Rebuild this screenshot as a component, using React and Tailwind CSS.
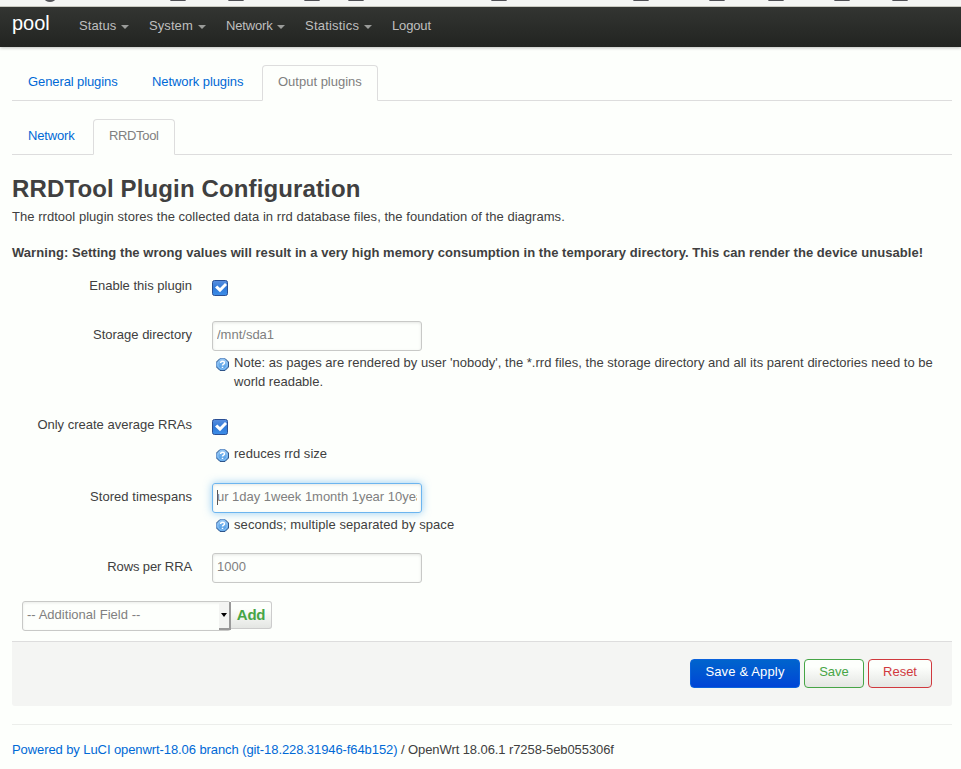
import { clsx } from "clsx";

const NAV = [
  { label: "Status", width: "w-[70px]", tracking: "tracking-[0.08px]", menu: true },
  { label: "System", width: "w-[77px]", tracking: "tracking-[0.08px]", menu: true },
  { label: "Network", width: "w-[79px]", tracking: "tracking-[-0.15px]", menu: true },
  { label: "Statistics", width: "w-[87px]", tracking: "tracking-[0.21px]", menu: true },
  { label: "Logout", width: "w-[60px]", tracking: "tracking-[-0.15px]", menu: false },
];

function ToolbarEdge() {
  return (
    <svg className="block h-[7px] w-full" width="961" height="7" shapeRendering="crispEdges">
      <rect width="961" height="6" fill="#f4f5f3" />
      <rect y="6" width="961" height="1" fill="#c9c9c0" />
      <ellipse cx="50" cy="-1.3" rx="5.4" ry="3.3" fill="#55555a" shapeRendering="auto" />
      {[170, 228, 304, 348, 491, 633, 709, 768, 834, 892].map((x) => (
        <g key={x}>
          <rect x={x} width="16" height="1" fill="#8a8a8e" />
          <rect x={x + 1} width="14" height="1" fill="#505055" />
        </g>
      ))}
    </svg>
  );
}

function Tab({ active, className, children }) {
  return (
    <a
      className={clsx(
        "block h-9 rounded-t border px-[15px] pt-[7px] leading-[18px] whitespace-nowrap",
        active ? "border-[#ddd] border-b-[#fdfffc] bg-[#fdfffc] text-[#808080]" : "border-transparent text-[#0069d6]",
        className,
      )}
    >
      {children}
    </a>
  );
}

function CheckBox() {
  return (
    <svg className="block size-4" viewBox="0 0 16 16">
      <defs>
        <linearGradient id="box" x1="0" y1="0" x2="0" y2="1">
          <stop offset="0" stopColor="#5a8fdf" />
          <stop offset="0.5" stopColor="#3079d8" />
          <stop offset="1" stopColor="#3d8ee8" />
        </linearGradient>
      </defs>
      <rect x="0.5" y="0.5" width="15" height="15" rx="2" fill="url(#box)" stroke="#2a4f94" />
      <path d="M3 7.4 L5.3 5.4 L8 8 L13 3 L15 5 L8 12.2 Z" fill="#fff" />
    </svg>
  );
}

function HelpIcon() {
  return (
    <svg className="block size-[13px] shrink-0" viewBox="0 0 13 13">
      <defs>
        <linearGradient id="help" x1="0" y1="0" x2="0" y2="1">
          <stop offset="0" stopColor="#8abff0" />
          <stop offset="1" stopColor="#4a9ae6" />
        </linearGradient>
      </defs>
      <path d="M4 .5h5L12.5 4v5L9 12.5H4L.5 9V4Z" fill="url(#help)" stroke="#2f5488" />
      <path d="M4.1 .5h4.8M.5 4.1v4.8" stroke="#6f9bd0" />
      <circle cx="6.5" cy="6.5" r="4.7" fill="none" stroke="#a5d0f8" strokeWidth="0.8" />
      <path d="M4.6 5.1C4.6 2.8 8.5 2.8 8.5 4.9c0 1.3-2 1.2-2 2.6M6.5 8.7v1.4" fill="none" stroke="#fff" strokeWidth="1.5" />
    </svg>
  );
}

function Row({ label, className, labelClass, children }) {
  return (
    <div className={clsx("flex", className)}>
      <div className={clsx("mt-[6px] w-[180px] shrink-0 text-right leading-[18px] whitespace-nowrap", labelClass)}>{label}</div>
      <div className="ml-5 min-w-0 grow">{children}</div>
    </div>
  );
}

function Hint({ className, textClass, children }) {
  return (
    <div className={clsx("flex pl-1", className)}>
      <HelpIcon />
      <div className={clsx("ml-[5px] leading-[19px] whitespace-nowrap", textClass)}>{children}</div>
    </div>
  );
}

function Field({ focused, children }) {
  return (
    <div
      className={clsx(
        "h-[30px] w-[210px] rounded-[3px] border px-1 pt-[4px] leading-[18px] text-[#808080]",
        focused
          ? "border-[#6cb5ef] shadow-[inset_0_1px_3px_rgba(0,0,0,0.1),0_0_8px_rgba(82,168,236,0.6)]"
          : "border-[#c8c9c7] shadow-[inset_0_1px_3px_rgba(0,0,0,0.1)]",
      )}
    >
      <div className="flex overflow-hidden whitespace-nowrap">{children}</div>
    </div>
  );
}

export default function App() {
  return (
    <div className="h-[769px] w-[961px] overflow-hidden bg-[#fdfffc] font-['Liberation_Sans',Arial,sans-serif] text-[13px] text-[#404040]">
      <ToolbarEdge />
      <header className="flex h-10 bg-linear-to-b from-[#333532] to-[#222421] pl-3 text-[#bfbfbf] shadow-[0_1px_3px_rgba(0,0,0,0.25)]">
        <a className="w-[57px] pt-[4px] text-[20px] leading-[24px] text-white">pool</a>
        <nav className="flex">
          {NAV.map((item) => (
            <a key={item.label} className={clsx("flex px-2.5 pt-[10px] leading-[18px]", item.width, item.tracking)}>
              {item.label}
              {item.menu && (
                <span className="mt-[8px] ml-auto h-0 w-0 border-x-4 border-t-4 border-x-transparent border-t-[#9a9b99]" />
              )}
            </a>
          ))}
        </nav>
      </header>

      <main className="mr-[9px] ml-3">
        <nav className="mt-[18px] flex h-9 border-b border-[#ddd]">
          <Tab className="w-[124px] tracking-[-0.1px]">General plugins</Tab>
          <Tab className="w-[126px] tracking-[-0.07px]">Network plugins</Tab>
          <Tab active className="w-[116px]">Output plugins</Tab>
        </nav>
        <nav className="mt-[18px] flex h-9 border-b border-[#ddd]">
          <Tab className="w-[81px] tracking-[-0.15px]">Network</Tab>
          <Tab active className="w-[82px] tracking-[-0.35px]">RRDTool</Tab>
        </nav>

        <h2 className="mt-[16px] text-[24px] leading-9 font-bold tracking-[0.13px] whitespace-nowrap">
          RRDTool Plugin Configuration
        </h2>
        <p className="mt-px leading-[18px] tracking-[0.036px] whitespace-nowrap">
          The rrdtool plugin stores the collected data in rrd database files, the foundation of the diagrams.
        </p>
        <p className="mt-[18px] leading-[18px] font-bold tracking-[0.052px] whitespace-nowrap">
          Warning: Setting the wrong values will result in a very high memory consumption in the temporary directory. This can
          render the device unusable!
        </p>

        <Row label="Enable this plugin" className="mt-[9px] h-[49px]">
          <div className="pt-[9px]"><CheckBox /></div>
        </Row>
        <Row label="Storage directory" className="h-[90px]">
          <div className="pt-[1px]"><Field>/mnt/sda1</Field></div>
          <Hint className="mt-[7px]" textClass="-mt-[5px] tracking-[0.018px]">
            Note: as pages are rendered by user 'nobody', the *.rrd files, the storage directory and all its parent directories
            need to be
            <br />
            world readable.
          </Hint>
        </Row>
        <Row label="Only create average RRAs" className="h-[72px]">
          <div className="pt-[9px]"><CheckBox /></div>
          <Hint className="mt-[14px]" textClass="-mt-[5px] tracking-[0.04px]">reduces rrd size</Hint>
        </Row>
        <Row label="Stored timespans" labelClass="tracking-[0.05px]" className="h-[70px]">
          <div className="pt-[1px]">
            <Field focused>
              <span className="mt-[2px] h-[15px] w-px shrink-0 bg-[#555]" />
              <span className="-ml-px tracking-[-0.02px]">ur 1day 1week 1month 1year 10yea</span>
            </Field>
          </div>
          <Hint className="mt-[6px]" textClass="-mt-[4px] tracking-[0.075px]">seconds; multiple separated by space</Hint>
        </Row>
        <Row label="Rows per RRA" labelClass="tracking-[-0.1px]" className="h-[48px]">
          <div className="pt-[1px]"><Field>1000</Field></div>
        </Row>

        <div className="ml-2.5 flex h-[41px] items-start pt-[1px]">
          <div className="flex h-[30px] w-[209px] rounded-[3px] border border-[#c8c9c7] pl-1 text-[#808080] shadow-[inset_0_1px_3px_rgba(0,0,0,0.08)]">
            <span className="pt-[4px] leading-[18px] tracking-[0.03px]">-- Additional Field --</span>
            <span className="-mr-px ml-auto flex h-[28px] w-[12px] items-center justify-center border-r-2 border-b-2 border-[#999] bg-[#f3f4f2]">
              <span className="h-0 w-0 border-x-[3.5px] border-t-4 border-x-transparent border-t-black" />
            </span>
          </div>
          <button className="h-7 w-[41px] rounded-r-[3px] border border-l-0 border-[#ccc] bg-linear-to-b from-[#fdfffc] from-25% to-[#e4e6e3] text-[15px] leading-[26px] font-bold tracking-[-0.3px] text-[#46a546]">
            Add
          </button>
        </div>

        <div className="flex h-[65px] justify-end gap-1 rounded-b-[3px] border-t border-[#ddd] bg-[#f4f5f3] pt-[17px] pr-5">
          <button className="h-[29px] w-[110px] rounded border border-[#0a62dc] bg-linear-to-b from-[#0064cd] to-[#0044d6] pb-[3px] leading-[18px] tracking-[0.15px] text-white">
            Save &amp; Apply
          </button>
          <button className="h-[29px] w-[60px] rounded border border-[#46a546] bg-linear-to-b from-[#fdfffc] from-25% to-[#e4e6e3] pb-[3px] leading-[18px] text-[#46a546]">
            Save
          </button>
          <button className="h-[29px] w-[64px] rounded border border-[#d0393e] bg-linear-to-b from-[#fdfffc] from-25% to-[#e4e6e3] pb-[3px] leading-[18px] text-[#d0393e]">
            Reset
          </button>
        </div>

        <footer className="mt-[18px] border-t border-[#eceeeb] pt-[16px] leading-[18px] tracking-[-0.088px] whitespace-nowrap">
          <a className="text-[#0069d6]">Powered by LuCI openwrt-18.06 branch (git-18.228.31946-f64b152)</a> / OpenWrt 18.06.1
          r7258-5eb055306f
        </footer>
      </main>
    </div>
  );
}
